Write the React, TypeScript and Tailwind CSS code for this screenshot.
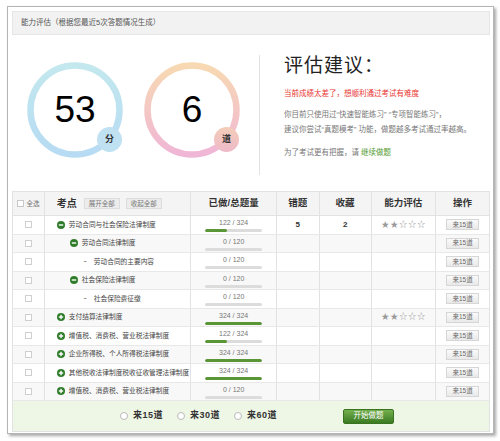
import React from 'react';

type Row = {
  level: number;
  icon: 'minus' | 'plus' | 'dash';
  name: string;
  done: number;
  total: number;
  wrong?: number;
  fav?: number;
  stars?: number;
};

const rows: Row[] = [
  { level: 0, icon: 'minus', name: '劳动合同与社会保险法律制度', done: 122, total: 324, wrong: 5, fav: 2, stars: 2 },
  { level: 1, icon: 'minus', name: '劳动合同法律制度', done: 0, total: 120 },
  { level: 2, icon: 'dash', name: '劳动合同的主要内容', done: 0, total: 120 },
  { level: 1, icon: 'minus', name: '社会保险法律制度', done: 0, total: 120 },
  { level: 2, icon: 'dash', name: '社会保险费征缴', done: 0, total: 120 },
  { level: 0, icon: 'plus', name: '支付结算法律制度', done: 324, total: 324, stars: 2 },
  { level: 0, icon: 'plus', name: '增值税、消费税、营业税法律制度', done: 122, total: 324 },
  { level: 0, icon: 'plus', name: '企业所得税、个人所得税法律制度', done: 324, total: 324 },
  { level: 0, icon: 'plus', name: '其他税收法律制度税收征收管理法律制度', done: 324, total: 324 },
  { level: 0, icon: 'plus', name: '增值税、消费税、营业税法律制度', done: 0, total: 120 },
];

const Ring = ({ id, from, to, value, unit, badge }: { id: string; from: string; to: string; value: string; unit: string; badge: string }) => (
  <div className="relative w-[96px] h-[96px]">
    <svg width="96" height="96" viewBox="0 0 96 96" className="absolute inset-0">
      <defs>
        <linearGradient id={id} x1="0" y1="0" x2="0" y2="1">
          <stop offset="0%" stopColor={from} />
          <stop offset="100%" stopColor={to} />
        </linearGradient>
      </defs>
      <circle cx="48" cy="48" r="44.5" fill="none" stroke={`url(#${id})`} strokeWidth="6.5" />
    </svg>
    <div className="absolute inset-0 flex items-center justify-center text-[37px] leading-none text-black pb-[2px]">{value}</div>
    <div className={`absolute left-[70px] top-[65px] w-[25px] h-[25px] rounded-full flex items-center justify-center text-[9px] font-bold text-[#333] ${badge}`}>
      {unit}
    </div>
  </div>
);

const Icon = ({ type }: { type: Row['icon'] }) => {
  if (type === 'dash') return <span className="shrink-0 text-[#666] text-[9px] w-[7px] text-center">-</span>;
  return (
    <svg width="8" height="8" viewBox="0 0 8 8" className="shrink-0">
      <circle cx="4" cy="4" r="4" fill="#2f7d2a" />
      <rect x="1.8" y="3.3" width="4.4" height="1.4" fill="#fff" />
      {type === 'plus' && <rect x="3.3" y="1.8" width="1.4" height="4.4" fill="#fff" />}
    </svg>
  );
};

const Stars = ({ n }: { n: number }) => (
  <div className="flex gap-[1px] text-[8px] leading-none text-[#999]">
    {[0, 1, 2, 3, 4].map(i => (
      <span key={i}>{i < n ? '★' : '☆'}</span>
    ))}
  </div>
);

const cols = ['w-[32px]', 'w-[147px]', 'w-[86px]', 'w-[43px]', 'w-[52px]', 'w-[65px]', 'w-[53px]'];

export default function App() {
  return (
    <div className="w-[500px] h-[441px] bg-white pt-[6px] pl-[7px]" style={{ fontFamily: '"Liberation Sans", "Noto Sans CJK SC", sans-serif' }}>
      <div className="w-[487px] h-[428px] border border-[#b5b5b5] shadow-[2px_2px_3px_rgba(0,0,0,0.35)] bg-white pt-[4px] pl-[4px] pr-[3px]">
        {/* header */}
        <div className="h-[24px] bg-[#f2f2f2] border border-[#e6e6e6] flex items-center pl-[8px] text-[7.5px] text-[#555]">
          能力评估（根据您最近5次答题情况生成）
        </div>

        {/* summary */}
        <div className="flex h-[156px]">
          <div className="w-[247px] flex gap-[21px] pl-[15px] pt-[27px]">
            <Ring id="g1" from="#c3e8ee" to="#b6dbf3" value="53" unit="分" badge="bg-[#bfe1f2]" />
            <Ring id="g2" from="#f7d9b2" to="#f0b6d6" value="6" unit="道" badge="bg-gradient-to-b from-[#f3cdb8] to-[#eeb9c9]" />
          </div>
          <div className="mt-[20px] h-[120px] border-l border-[#e2e2e2]" />
          <div className="pl-[24px] pt-[21px]">
            <div className="text-[19px] text-[#222] leading-none tracking-[1px]">评估建议：</div>
            <div className="mt-[15px] text-[7.5px] text-[#e8342f] leading-none">当前成绩太差了，想顺利通过考试有难度</div>
            <div className="mt-[9px] text-[7.5px] text-[#777] leading-[15px]">
              <div>你目前只使用过“快速智能练习” “专项智能练习”，</div>
              <div>建议你尝试“真题模考” 功能，做题越多考试通过率越高。</div>
            </div>
            <div className="mt-[12px] text-[7.5px] text-[#777] leading-none">
              为了考试更有把握，请 <span className="text-[#4f9a2c]">继续做题</span>
            </div>
          </div>
        </div>

        {/* table */}
        <div className="border border-[#e2e2e2] text-[8px] text-[#444]">
          <div className="flex h-[24px] bg-[#f4f4f4] border-b border-[#e2e2e2]">
            <div className={`${cols[0]} border-r border-[#e2e2e2] flex items-center justify-center gap-[2px] text-[6.5px] text-[#777]`}>
              <span className="w-[7px] h-[7px] border border-[#c8c8c8] bg-white" />全选
            </div>
            <div className={`${cols[1]} border-r border-[#e2e2e2] flex items-center pl-[12px] gap-[6px]`}>
              <span className="text-[10px] font-bold text-[#333] mr-[1px]">考点</span>
              <span className="px-[4px] h-[11px] flex items-center bg-[#ececec] border border-[#ddd] text-[6.5px] text-[#777]">展开全部</span>
              <span className="px-[4px] h-[11px] flex items-center bg-[#ececec] border border-[#ddd] text-[6.5px] text-[#777]">收起全部</span>
            </div>
            <div className={`${cols[2]} border-r border-[#e2e2e2] flex items-center justify-center text-[9.5px] font-bold text-[#333]`}>已做/总题量</div>
            <div className={`${cols[3]} border-r border-[#e2e2e2] flex items-center justify-center text-[9.5px] font-bold text-[#333]`}>错题</div>
            <div className={`${cols[4]} border-r border-[#e2e2e2] flex items-center justify-center text-[9.5px] font-bold text-[#333]`}>收藏</div>
            <div className={`${cols[5]} border-r border-[#e2e2e2] flex items-center justify-center text-[9.5px] font-bold text-[#333]`}>能力评估</div>
            <div className={`${cols[6]} flex items-center justify-center text-[9.5px] font-bold text-[#333]`}>操作</div>
          </div>
          {rows.map((r, i) => (
            <div key={i} className={`flex h-[18.5px] border-b border-[#e8e8e8] ${i % 2 === 1 ? 'bg-[#f8f8f8]' : 'bg-white'}`}>
              <div className={`${cols[0]} border-r border-[#e2e2e2] flex items-center justify-center`}>
                <span className="w-[7px] h-[7px] border border-[#cfcfcf] bg-white" />
              </div>
              <div
                className={`${cols[1]} border-r border-[#e2e2e2] flex items-center ${
                  r.level === 0 ? 'pl-[12px] gap-[4px]' : r.level === 1 ? 'pl-[25px] gap-[4px]' : 'pl-[37px] gap-[5px]'
                }`}
              >
                <Icon type={r.icon} />
                <span className="whitespace-nowrap text-[6.7px] text-[#444]">{r.name}</span>
              </div>
              <div className={`${cols[2]} border-r border-[#e2e2e2] flex flex-col items-center pt-[2px]`}>
                <span className="text-[7px] leading-[9px] text-[#777]">{r.done} / {r.total}</span>
                <div className="mt-[2px] w-[57px] h-[3px] rounded-full bg-[#dcdcdc] overflow-hidden">
                  <div className="h-full bg-[#5a9636] rounded-full" style={{ width: `${(r.done / r.total) * 100}%` }} />
                </div>
              </div>
              <div className={`${cols[3]} border-r border-[#e2e2e2] flex items-center justify-center font-bold text-[#333]`}>{r.wrong ?? ''}</div>
              <div className={`${cols[4]} border-r border-[#e2e2e2] flex items-center justify-center font-bold text-[#333]`}>{r.fav ?? ''}</div>
              <div className={`${cols[5]} border-r border-[#e2e2e2] flex items-center justify-center`}>
                {r.stars !== undefined && <Stars n={r.stars} />}
              </div>
              <div className={`${cols[6]} flex items-center justify-center`}>
                <span className="w-[33px] h-[11px] flex items-center justify-center border border-[#d6d6d6] bg-gradient-to-b from-[#fafafa] to-[#e9e9e9] text-[6.5px] text-[#666]">来15道</span>
              </div>
            </div>
          ))}
          <div className="h-[30px] bg-[#eef6e6] flex items-center pl-[107px]">
            {['来15道', '来30道', '来60道'].map((t, i) => (
              <div key={i} className="flex items-center gap-[5px] mr-[14px]">
                <span className="w-[8px] h-[8px] rounded-full border border-[#bbb] bg-white" />
                <span className="text-[9px] font-bold text-[#333] tracking-[0.5px]">{t}</span>
              </div>
            ))}
            <div className="ml-[52px] w-[51px] h-[15px] rounded-[2px] bg-gradient-to-b from-[#74b04e] to-[#3b7a22] border border-[#3a7320] flex items-center justify-center text-[7.5px] text-white">
              开始做题
            </div>
          </div>
        </div>
      </div>
    </div>
  );
}
